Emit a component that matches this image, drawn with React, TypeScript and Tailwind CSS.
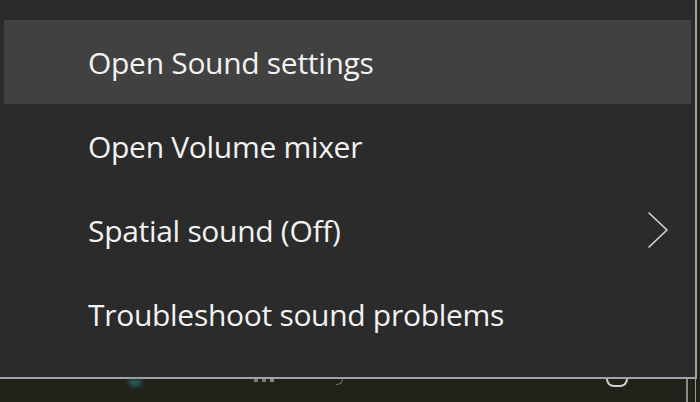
import React from 'react';

const items = [
    { label: 'Open Sound settings', active: true },
    { label: 'Open Volume mixer' },
    { label: 'Spatial sound (Off)', submenu: true },
    { label: 'Troubleshoot sound problems' },
];

const Chevron = () => (
    <svg width="24" height="38" viewBox="0 0 24 38" fill="none" className="text-[#d8d8d8]">
        <path d="M3 2 L21 19 L3 36" stroke="currentColor" strokeWidth="1.6" strokeLinecap="round" strokeLinejoin="round" />
    </svg>
);

export default function App() {
    return (
        <div
            className="w-[700px] h-[402px] flex flex-col bg-[#22221b] overflow-hidden"
            style={{ fontFamily: '"Open Sans", "Noto Sans", sans-serif' }}
        >
            {/* Context menu */}
            <div className="w-[697px] h-[379px] shrink-0 bg-[#2b2b2b] border-r-2 border-b-2 border-[#a3a3a3] pt-5 px-1">
                {items.map(item => (
                    <div
                        key={item.label}
                        className={`h-[84px] flex items-center justify-between pl-[84px] pr-[21px] ${item.active ? 'bg-[#414141]' : ''}`}
                    >
                        <span className="text-[30px] text-[#f2f2f2] leading-none tracking-[-0.3px] pt-[2px]">{item.label}</span>
                        {item.submenu && <Chevron />}
                    </div>
                ))}
            </div>

            {/* Taskbar peeking below */}
            <div className="flex-1 flex items-start">
                <div className="w-[128px] shrink-0" />
                <div className="w-[14px] h-[6px] shrink-0 mt-[1px] rounded-b-full bg-[#2e7f8a] blur-[2px] opacity-70" />
                <div className="w-[112px] shrink-0" />
                <div className="w-[30px] shrink-0 flex gap-[4px]">
                    <div className="w-[4px] h-[3px] bg-[#7a7a7a]" />
                    <div className="w-[4px] h-[3px] bg-[#7a7a7a]" />
                    <div className="w-[4px] h-[3px] bg-[#8a8a8a]" />
                </div>
                <div className="w-[52px] shrink-0" />
                <div className="w-[7px] h-[6px] shrink-0 border-b border-r border-[#6a6a6a] rounded-br-full" />
                <div className="w-[263px] shrink-0" />
                <div className="w-[22px] h-[8px] shrink-0 border-2 border-t-0 border-[#d0d0d0] rounded-b-full" />
                <div className="w-[58px] shrink-0" />
                <div className="w-[2px] h-full shrink-0 bg-[#8c8c8c]" />
                <div className="w-[7px] shrink-0" />
                <div className="w-[1px] h-full shrink-0 bg-[#9a9a9a]" />
            </div>
        </div>
    );
}
